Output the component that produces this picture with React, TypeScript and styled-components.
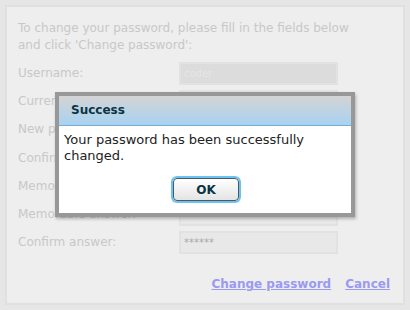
import React from "react";
import styled, { createGlobalStyle } from "styled-components";

const GlobalStyle = createGlobalStyle`
  html, body {
    margin: 0;
    padding: 0;
    background: #e6e6e6;
  }
  body {
    font-family: "DejaVu Sans", Verdana, sans-serif;
    font-size: 12px;
  }
`;

const Page = styled.div`
  position: relative;
  width: 410px;
  height: 310px;
  padding: 5px;
  box-sizing: border-box;
`;

const Panel = styled.div`
  height: 100%;
  box-sizing: border-box;
  background: #eeeeee;
  border: 2px solid #e0e0e0;
  padding: 13px 11px 0 11px;
  color: #c8c8c8;
`;

const Intro = styled.p`
  margin: 0 0 8px 0;
  line-height: 17px;
`;

const FormGrid = styled.div`
  display: grid;
  grid-template-columns: 161px 159px;
  grid-auto-rows: 23px;
  row-gap: 5.2px;
  align-items: center;
`;

const Label = styled.span`
  line-height: 23px;
`;

const Field = styled.div<{ $disabled?: boolean }>`
  height: 23px;
  box-sizing: border-box;
  border: 2px solid #e2e2e2;
  background: ${(p) => (p.$disabled ? "#dcdcdc" : "#e8e8e8")};
  color: ${(p) => (p.$disabled ? "#e6e6e6" : "#a8a8a8")};
  font-size: 10px;
  padding: 0 3px;
  line-height: 19px;
`;

const Actions = styled.div`
  display: flex;
  justify-content: flex-end;
  gap: 14px;
  margin-top: 23px;
  padding-right: 2px;
`;

const ActionLink = styled.a`
  color: #9a9af0;
  font-weight: bold;
  text-decoration: underline;
`;

const Dialog = styled.div`
  position: absolute;
  left: 55px;
  top: 92px;
  width: 300px;
  height: 125px;
  box-sizing: border-box;
  border: 4px solid #989898;
  background: #ffffff;
  box-shadow: 1px 2px 3px rgba(0, 0, 0, 0.25);
  display: flex;
  flex-direction: column;
`;

const DialogHeader = styled.div`
  height: 30px;
  box-sizing: border-box;
  border-bottom: 1px solid #7aaccc;
  background: linear-gradient(#d4d4d4, #a8d2f2);
  color: #0a3444;
  font-weight: bold;
  padding-left: 12px;
  line-height: 29px;
`;

const DialogBody = styled.div`
  padding: 6px 5px 0 5px;
  color: #222222;
  font-size: 13px;
  line-height: 16px;
  flex: 1;
  display: flex;
  flex-direction: column;
`;

const ButtonRow = styled.div`
  display: flex;
  justify-content: center;
  margin-top: 14px;
`;

const OkButton = styled.button`
  width: 66px;
  height: 23px;
  margin-left: 2px;
  box-sizing: border-box;
  border: 1px solid #555;
  border-radius: 4px;
  box-shadow: 0 0 0 2px #66c4f6;
  background: linear-gradient(#ffffff, #e4e4e4);
  color: #0a3444;
  font-family: "DejaVu Sans", Verdana, sans-serif;
  font-weight: bold;
  font-size: 12px;
  padding: 0;
`;

const rows: { label: string; value?: string; disabled?: boolean }[] = [
  { label: "Username:", value: "coder", disabled: true },
  { label: "Current password:" },
  { label: "New password:" },
  { label: "Confirm password:" },
  { label: "Memorable question:" },
  { label: "Memorable answer:" },
  { label: "Confirm answer:", value: "******" },
];

export default function App() {
  return (
    <>
      <GlobalStyle />
      <Page>
        <Panel>
          <Intro>
            To change your password, please fill in the fields below
            <br />
            and click 'Change password':
          </Intro>
          <FormGrid>
            {rows.map((r) => (
              <React.Fragment key={r.label}>
                <Label>{r.label}</Label>
                <Field $disabled={r.disabled}>{r.value}</Field>
              </React.Fragment>
            ))}
          </FormGrid>
          <Actions>
            <ActionLink>Change password</ActionLink>
            <ActionLink>Cancel</ActionLink>
          </Actions>
        </Panel>
        <Dialog>
          <DialogHeader>Success</DialogHeader>
          <DialogBody>
            Your password has been successfully changed.
            <ButtonRow>
              <OkButton>OK</OkButton>
            </ButtonRow>
          </DialogBody>
        </Dialog>
      </Page>
    </>
  );
}
